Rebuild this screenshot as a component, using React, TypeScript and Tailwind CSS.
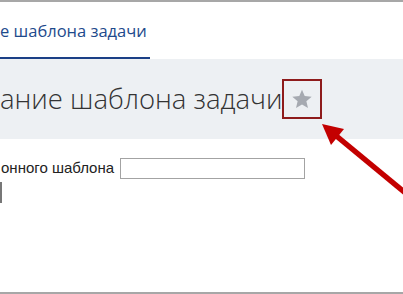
import React from 'react';

const Star: React.FC = () => (
  <svg width="22" height="22" viewBox="0 0 24 24" className="text-[#a6aab1]">
    <path
      fill="currentColor"
      d="M12 1.8l2.95 7.02 7.6.62-5.78 4.98 1.76 7.42L12 17.9l-6.53 3.94 1.76-7.42L1.45 9.44l7.6-.62z"
    />
  </svg>
);

const Arrow: React.FC = () => (
  <svg className="absolute left-0 top-0 pointer-events-none" width="403" height="294">
    <line x1="420" y1="203" x2="334" y2="132" stroke="#c30000" strokeWidth="5.5" />
    <polygon points="322,122 344,127 331,143" fill="#c30000" />
  </svg>
);

export default function App() {
  return (
    <div className="relative w-[403px] h-[294px] overflow-hidden bg-white border-t-2 border-b-2 border-[#a7a7a7]">
      {/* tabs */}
      <div className="h-[57px] flex flex-col justify-end">
        <div
          className="w-[150px] border-b-2 border-[#1b3f86] pb-[15px] text-[16.5px] leading-[22px] text-[#1e4a8c] whitespace-nowrap"
          style={{ fontFamily: '"Open Sans", "Noto Sans", sans-serif' }}
        >
          е шаблона задачи
        </div>
      </div>

      {/* page title */}
      <div className="h-[80px] bg-[#edf0f3] flex items-center">
        <h1
          className="text-[27.5px] leading-none font-light text-[#333] whitespace-nowrap"
          style={{ fontFamily: '"Open Sans", "Noto Sans", sans-serif' }}
        >
          ание шаблона задачи
        </h1>
        <div className="-ml-[1px] w-[40px] h-[40px] border-2 border-[#8e1b1b] flex items-center justify-center">
          <Star />
        </div>
      </div>

      {/* form */}
      <div className="pt-[18px]" style={{ fontFamily: '"Liberation Sans", Arial, sans-serif' }}>
        <div className="flex items-center gap-[6px]">
          <span className="text-[15px] text-[#222] pl-[1px]">онного шаблона</span>
          <input type="text" className="w-[185px] h-[21px] border border-[#a3a3a3] bg-white outline-none" />
        </div>
        <div className="mt-[2px] w-[2px] h-[21px] bg-[#777]" />
      </div>

      <Arrow />
    </div>
  );
}
